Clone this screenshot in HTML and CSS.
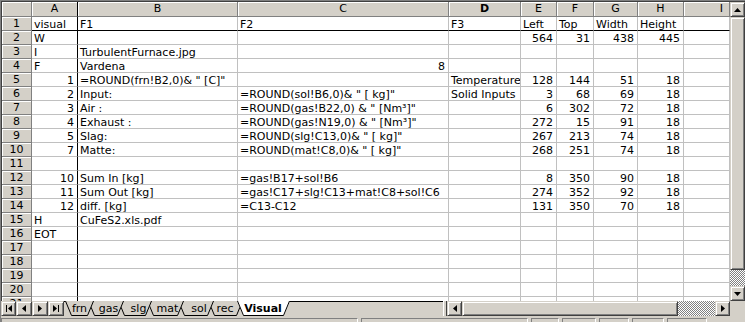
FILE: index.html
```html
<!DOCTYPE html>
<html lang="en">
<head>
    <meta charset="UTF-8">
    <title>Visual - CuFeS2.xls</title>
    <link rel="stylesheet" href="styles.css">
</head>
<body>
    <div class="window">
        <div class="top">
            <div class="grid" id="grid"></div>
            <div class="vscroll">
                <div class="btn sb-btn">
                    <svg width="7" height="4" viewBox="0 0 7 4"><polygon points="3.5,0 7,4 0,4" fill="#000"/></svg>
                </div>
                <div class="btn vthumb"></div>
                <div class="track vtrack"></div>
                <div class="btn sb-btn">
                    <svg width="7" height="4" viewBox="0 0 7 4"><polygon points="0,0 7,0 3.5,4" fill="#000"/></svg>
                </div>
            </div>
        </div>

        <div class="tabbar">
            <div class="nav">
                <div class="btn nav-btn first">
                    <svg width="6" height="7" viewBox="0 0 6 7"><rect x="0" y="0" width="1" height="7" fill="#000"/><polygon points="6,0 6,7 2,3.5" fill="#000"/></svg>
                </div>
                <div class="btn nav-btn">
                    <svg width="4" height="7" viewBox="0 0 4 7"><polygon points="4,0 4,7 0,3.5" fill="#000"/></svg>
                </div>
                <div class="btn nav-btn">
                    <svg width="4" height="7" viewBox="0 0 4 7"><polygon points="0,0 0,7 4,3.5" fill="#000"/></svg>
                </div>
                <div class="btn nav-btn">
                    <svg width="6" height="7" viewBox="0 0 6 7"><polygon points="0,0 0,7 4,3.5" fill="#000"/><rect x="5" y="0" width="1" height="7" fill="#000"/></svg>
                </div>
            </div>

            <svg class="tabs" width="379" height="15" viewBox="0 0 379 15">
                <line x1="0" y1="0.5" x2="379" y2="0.5" stroke="#000"/>
                <g class="tab">
                    <polygon points="144,0 150,14 173,14 179,0"/>
                    <polyline points="144.5,0 150.5,14.5 172.5,14.5 178.5,0"/>
                    <text x="161" y="11">rec</text>
                </g>
                <g class="tab">
                    <polygon points="114,0 120,14 144,14 150,0"/>
                    <polyline points="114.5,0 120.5,14.5 143.5,14.5 149.5,0"/>
                    <text x="135" y="11">sol</text>
                </g>
                <g class="tab">
                    <polygon points="83,0 89,14 114,14 120,0"/>
                    <polyline points="83.5,0 89.5,14.5 113.5,14.5 119.5,0"/>
                    <text x="103.5" y="11">mat</text>
                </g>
                <g class="tab">
                    <polygon points="54,0 60,14 82,14 88,0"/>
                    <polyline points="54.5,0 60.5,14.5 81.5,14.5 87.5,0"/>
                    <text x="74.5" y="11">slg</text>
                </g>
                <g class="tab">
                    <polygon points="24,0 30,14 54,14 60,0"/>
                    <polyline points="24.5,0 30.5,14.5 53.5,14.5 59.5,0"/>
                    <text x="44.5" y="11">gas</text>
                </g>
                <g class="tab">
                    <polygon points="1,0 7,14 24,14 30,0"/>
                    <polyline points="1.5,0 7.5,14.5 23.5,14.5 29.5,0"/>
                    <text x="15.5" y="11">frn</text>
                </g>
                <g class="tab active">
                    <polygon points="173,0 179,14 220,14 226,0"/>
                    <polyline points="173.5,0 179.5,14.5 219.5,14.5 225.5,0"/>
                    <text x="199" y="11">Visual</text>
                </g>
            </svg>

            <div class="split"></div>
            <div class="btn sb-btn">
                <svg width="4" height="7" viewBox="0 0 4 7"><polygon points="4,0 4,7 0,3.5" fill="#000"/></svg>
            </div>
            <div class="btn hthumb"></div>
            <div class="track htrack"></div>
            <div class="btn sb-btn">
                <svg width="4" height="7" viewBox="0 0 4 7"><polygon points="0,0 0,7 4,3.5" fill="#000"/></svg>
            </div>
            <div class="corner"></div>
        </div>

        <div class="status">
            <div class="panel p-main"></div>
            <div class="panel p-2"></div>
            <div class="panel p-3"></div>
            <div class="panel p-4"></div>
            <div class="panel p-5"></div>
            <div class="panel p-6"></div>
            <div class="panel p-7"></div>
        </div>
    </div>

    <script>
        var letters = ['A', 'B', 'C', 'D', 'E', 'F', 'G', 'H', 'I'];

        var data = [
            ['visual', 'F1', 'F2', 'F3', 'Left', 'Top', 'Width', 'Height'],
            ['W', '', '', '', 564, 31, 438, 445],
            ['I', 'TurbulentFurnace.jpg'],
            ['F', 'Vardena', 8],
            [1, '=ROUND(frn!B2,0)& " [C]"', '', 'Temperature', 128, 144, 51, 18],
            [2, 'Input:', '=ROUND(sol!B6,0)& " [ kg]"', 'Solid Inputs', 3, 68, 69, 18],
            [3, 'Air :', '=ROUND(gas!B22,0) & " [Nm³]"', '', 6, 302, 72, 18],
            [4, 'Exhaust :', '=ROUND(gas!N19,0) & " [Nm³]"', '', 272, 15, 91, 18],
            [5, 'Slag:', '=ROUND(slg!C13,0)& " [ kg]"', '', 267, 213, 74, 18],
            [7, 'Matte:', '=ROUND(mat!C8,0)& " [ kg]"', '', 268, 251, 74, 18],
            [],
            [10, 'Sum In [kg]', '=gas!B17+sol!B6', '', 8, 350, 90, 18],
            [11, 'Sum Out [kg]', '=gas!C17+slg!C13+mat!C8+sol!C6', '', 274, 352, 92, 18],
            [12, 'diff. [kg]', '=C13-C12', '', 131, 350, 70, 18],
            ['H', 'CuFeS2.xls.pdf'],
            ['EOT'],
            [], [], [], [], []
        ];

        var grid = document.getElementById('grid');

        function addCell(cls, text) {
            var div = document.createElement('div');
            div.className = cls;
            div.textContent = text;
            grid.appendChild(div);
        }

        // column headers
        addCell('hdr corner-cell', '');
        for (var c = 0; c < letters.length; c++) {
            var cls = 'hdr col-hdr';
            if (c == 0) cls += ' freeze-col';
            if (letters[c] == 'D') cls += ' active';
            if (letters[c] == 'I') cls += ' last';
            addCell(cls, letters[c]);
        }

        // rows
        for (var r = 0; r < data.length; r++) {
            addCell('hdr row-hdr', r + 1);
            var row = data[r];
            for (var c = 0; c < letters.length; c++) {
                var v = row[c];
                var next = row[c + 1];
                var cls = 'cell';
                if (typeof v == 'number') cls += ' num';
                if (v !== undefined && v !== '' && (next === undefined || next === '')) cls += ' spill';
                if (c == 0) cls += ' freeze-col';
                if (r == 0) cls += ' freeze-row';
                addCell(cls, v === undefined ? '' : v);
            }
        }
    </script>
</body>
</html>
```

FILE: styles.css
```css
body {
    margin: 0;
    background-color: #d4d0c8;
    font-family: "DejaVu Sans", Verdana, sans-serif;
    font-size: 11px;
    color: #000;
}

.window {
    width: 745px;
    height: 322px;
    box-sizing: border-box;
    border-top: 1px solid #808080;
    border-left: 1px solid #808080;
    display: flex;
    flex-direction: column;
    overflow: hidden;
}

.top {
    display: flex;
    height: 300px;
    border-top: 1px solid #404040;
    box-sizing: border-box;
}

.grid {
    width: 728px;
    height: 299px;
    border-left: 1px solid #404040;
    background-color: #fff;
    display: grid;
    grid-template-columns: 30px 46px 160px 211px 72px 36px 37px 44px 46px 46px;
    grid-template-rows: 15px;
    grid-auto-rows: 14px;
    overflow: hidden;
}

/* headers */
.hdr {
    background-color: #d4d0c8;
    border-right: 1px solid #808080;
    border-bottom: 1px solid #808080;
    box-shadow: inset 1px 1px 0 #fff;
    text-align: center;
    line-height: 14px;
    white-space: nowrap;
    overflow: hidden;
}

.row-hdr {
    line-height: 13px;
}

.col-hdr.active {
    font-weight: bold;
}

.col-hdr.last {
    text-align: right;
    padding-right: 6px;
}

/* cells */
.cell {
    border-right: 1px solid #c0c0c0;
    border-bottom: 1px solid #c0c0c0;
    padding: 1px 2px 0 2px;
    line-height: 13px;
    white-space: nowrap;
    overflow: hidden;
}

.cell.spill {
    overflow: visible;
    position: relative;
    z-index: 1;
}

.cell.num {
    text-align: right;
    padding-right: 3px;
}

.freeze-col {
    border-right-color: #000;
}

.freeze-row {
    border-bottom-color: #000;
}

/* scroll bars */
.btn {
    box-sizing: border-box;
    background-color: #d4d0c8;
    border: 1px solid;
    border-color: #d4d0c8 #404040 #404040 #d4d0c8;
    box-shadow: inset 1px 1px 0 #fff, inset -1px -1px 0 #808080;
    display: flex;
    align-items: center;
    justify-content: center;
}

.vscroll {
    width: 15px;
    height: 299px;
    display: flex;
    flex-direction: column;
}

.sb-btn {
    width: 15px;
    height: 15px;
    flex-shrink: 0;
}

.vthumb {
    height: 253px;
}

.track {
    background-color: #fff;
    background-image: repeating-conic-gradient(#808080 0 25%, #fff 0 50%);
    background-size: 2px 2px;
}

.vtrack {
    height: 16px;
}

.tabbar {
    height: 15px;
    display: flex;
}

.nav {
    display: flex;
    width: 63px;
}

.nav-btn {
    width: 16px;
    height: 15px;
}

.nav-btn.first {
    width: 15px;
}

.tabs {
    display: block;
    flex-shrink: 0;
}

.tab polygon {
    fill: #d4d0c8;
}

.tab polyline {
    fill: none;
    stroke: #000;
    stroke-width: 1;
}

.tab text {
    font-family: "DejaVu Sans", Verdana, sans-serif;
    font-size: 11px;
    text-anchor: middle;
    fill: #000;
}

.tab.active polygon {
    fill: #fff;
}

.tab.active text {
    font-weight: bold;
}

.split {
    width: 4px;
    border-left: 1px solid #fff;
    border-right: 1px solid #404040;
    box-sizing: border-box;
    background-color: #d4d0c8;
}

.hthumb {
    width: 216px;
    height: 15px;
}

.htrack {
    width: 37px;
    height: 15px;
}

.corner {
    width: 15px;
    background-color: #d4d0c8;
}

/* status bar */
.status {
    height: 5px;
    display: flex;
    gap: 3px;
    padding-top: 2px;
}

.panel {
    height: 6px;
    box-sizing: border-box;
    border-top: 1px solid #808080;
    border-left: 1px solid #808080;
    border-right: 1px solid #fff;
}

.p-main { width: 357px; }
.p-2 { width: 167px; }
.p-3 { width: 28px; }
.p-4 { width: 34px; }
.p-5 { width: 30px; }
.p-6 { width: 32px; }
.p-7 { width: 40px; }
```
